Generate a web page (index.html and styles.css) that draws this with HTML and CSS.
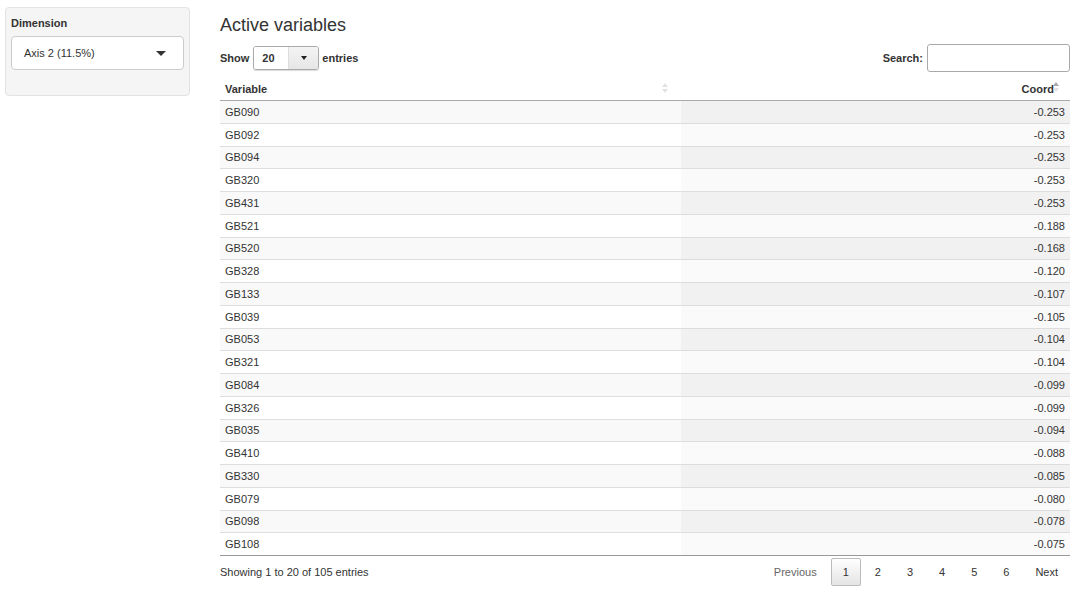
FILE: index.html
```html
<!DOCTYPE html>
<html>
<head>
<meta charset="utf-8">
<link rel="stylesheet" href="styles.css">
</head>
<body>
<div class="page">
  <aside class="sidebar">
    <div class="well">
      <div class="label">Dimension</div>
      <div class="select">
        <span>Axis 2 (11.5%)</span>
        <span class="caret"></span>
      </div>
    </div>
  </aside>
  <main class="main">
    <h4 class="title">Active variables</h4>
    <div class="controls">
      <div class="length">
        <b>Show</b>
        <div class="lsel"><span class="lval">20</span><span class="lbtn"><span class="caret small"></span></span></div>
        <b>entries</b>
      </div>
      <div class="search"><b>Search:</b><div class="sinput"></div></div>
    </div>
    <table class="tbl">
      <thead>
        <tr>
          <th class="c1">Variable<span class="sort both"><i class="up"></i><i class="dn"></i></span></th>
          <th class="c2">Coord<span class="sort asc"><i class="up"></i><i class="dn"></i></span></th>
        </tr>
      </thead>
      <tbody id="rows">
        <tr><td class="c1">GB090</td><td class="c2">-0.253</td></tr>
        <tr><td class="c1">GB092</td><td class="c2">-0.253</td></tr>
        <tr><td class="c1">GB094</td><td class="c2">-0.253</td></tr>
        <tr><td class="c1">GB320</td><td class="c2">-0.253</td></tr>
        <tr><td class="c1">GB431</td><td class="c2">-0.253</td></tr>
        <tr><td class="c1">GB521</td><td class="c2">-0.188</td></tr>
        <tr><td class="c1">GB520</td><td class="c2">-0.168</td></tr>
        <tr><td class="c1">GB328</td><td class="c2">-0.120</td></tr>
        <tr><td class="c1">GB133</td><td class="c2">-0.107</td></tr>
        <tr><td class="c1">GB039</td><td class="c2">-0.105</td></tr>
        <tr><td class="c1">GB053</td><td class="c2">-0.104</td></tr>
        <tr><td class="c1">GB321</td><td class="c2">-0.104</td></tr>
        <tr><td class="c1">GB084</td><td class="c2">-0.099</td></tr>
        <tr><td class="c1">GB326</td><td class="c2">-0.099</td></tr>
        <tr><td class="c1">GB035</td><td class="c2">-0.094</td></tr>
        <tr><td class="c1">GB410</td><td class="c2">-0.088</td></tr>
        <tr><td class="c1">GB330</td><td class="c2">-0.085</td></tr>
        <tr><td class="c1">GB079</td><td class="c2">-0.080</td></tr>
        <tr><td class="c1">GB098</td><td class="c2">-0.078</td></tr>
        <tr><td class="c1">GB108</td><td class="c2">-0.075</td></tr>
      </tbody>
    </table>
    <div class="footer">
      <div class="info">Showing 1 to 20 of 105 entries</div>
      <div class="pager">
        <span class="pbtn prev">Previous</span>
        <span class="pbtn current">1</span>
        <span class="pbtn">2</span>
        <span class="pbtn">3</span>
        <span class="pbtn">4</span>
        <span class="pbtn">5</span>
        <span class="pbtn">6</span>
        <span class="pbtn">Next</span>
      </div>
    </div>
  </main>
</div>
</body>
</html>
```

FILE: styles.css
```css
html, body {
  margin: 0;
  padding: 0;
  background: #fff;
}
body {
  font-family: "Liberation Sans", Arial, sans-serif;
  font-size: 11px;
  color: #333;
}
.page {
  display: flex;
  align-items: flex-start;
}
.sidebar {
  width: 185px;
  margin: 7px 0 0 5px;
  flex: none;
}
.well {
  box-sizing: border-box;
  height: 89px;
  background: #f5f5f5;
  border: 1px solid #e3e3e3;
  border-radius: 4px;
  padding: 9px 5px 0 5px;
}
.label {
  font-weight: bold;
  line-height: 13px;
  color: #333;
}
.select {
  margin-top: 6px;
  box-sizing: border-box;
  height: 34px;
  background: #fff;
  border: 1px solid #ccc;
  border-radius: 4px;
  display: flex;
  align-items: center;
  justify-content: space-between;
  padding: 0 17px 0 12px;
  color: #333;
}
.caret {
  width: 0;
  height: 0;
  border-left: 5px solid transparent;
  border-right: 5px solid transparent;
  border-top: 5px solid #333;
}
.caret.small {
  border-left-width: 3px;
  border-right-width: 3px;
  border-top-width: 4px;
  border-top-color: #222;
}
.main {
  margin-left: 30px;
  width: 850px;
  flex: none;
}
.title {
  margin: 15px 0 0 0;
  font-size: 18px;
  line-height: 20px;
  font-weight: normal;
  color: #333;
}
.controls {
  margin-top: 9px;
  height: 28px;
  display: flex;
  align-items: center;
  justify-content: space-between;
}
.length {
  display: flex;
  align-items: center;
}
.lsel {
  margin: 0 3px 0 4px;
  box-sizing: border-box;
  width: 66px;
  height: 24px;
  border: 1px solid #aaa;
  border-radius: 3px;
  display: flex;
  overflow: hidden;
  box-shadow: 0 1px 1px rgba(0,0,0,0.15);
}
.lval {
  flex: 1;
  display: flex;
  align-items: center;
  padding-left: 8px;
  font-weight: bold;
  background: #fff;
}
.lbtn {
  width: 29px;
  display: flex;
  align-items: center;
  justify-content: center;
  background: linear-gradient(#f4f4f4, #e6e6e6);
  border-left: 1px solid #ddd;
}
.search {
  display: flex;
  align-items: center;
}
.sinput {
  margin-left: 4px;
  box-sizing: border-box;
  width: 143px;
  height: 28px;
  border: 1px solid #aaa;
  border-radius: 3px;
  background: #fff;
}
.tbl {
  margin-top: 6px;
  width: 850px;
  border-collapse: separate;
  border-spacing: 0;
  table-layout: fixed;
}
.tbl th {
  box-sizing: border-box;
  height: 23px;
  padding: 0 5px;
  text-align: left;
  font-weight: bold;
  border-bottom: 1px solid #aaa;
  position: relative;
  vertical-align: middle;
}
.tbl th.c1 { width: 461px; }
.tbl th.c2 { text-align: right; padding-right: 16px; }
.tbl td {
  box-sizing: border-box;
  height: 22.75px;
  padding: 0 5px;
  border-bottom: 1px solid #ddd;
  vertical-align: middle;
  background: #fff;
}
.tbl td.c2 {
  text-align: right;
  background: #fafafa;
}
.tbl tbody tr:nth-child(odd) td.c1 { background: #f9f9f9; }
.tbl tbody tr:nth-child(odd) td.c2 { background: #f1f1f1; }
.tbl tbody tr:last-child td { border-bottom: 1px solid #999; }
.sort {
  position: absolute;
  top: 5px;
  right: 13px;
  display: flex;
  flex-direction: column;
  gap: 2px;
}
.sort i {
  display: block;
  width: 0;
  height: 0;
  border-left: 3px solid transparent;
  border-right: 3px solid transparent;
}
.sort i.up { border-bottom: 4px solid #e2e2e2; }
.sort i.dn { border-top: 4px solid #e2e2e2; }
.sort.asc i.up { border-bottom-color: #a8a8a8; }
.sort.asc { right: 11px; top: 4px; }
.footer {
  display: flex;
  justify-content: space-between;
  align-items: center;
  margin-top: 2px;
}
.pager {
  display: flex;
  align-items: center;
}
.pbtn {
  box-sizing: border-box;
  height: 28px;
  display: flex;
  align-items: center;
  padding: 0 11px;
  margin-left: 2px;
  border: 1px solid transparent;
  border-radius: 2px;
  color: #333;
}
.pbtn.prev { color: #666; }
.pbtn.current {
  border-color: #bbb;
  background: linear-gradient(#fff, #e4e4e4);
}
```
